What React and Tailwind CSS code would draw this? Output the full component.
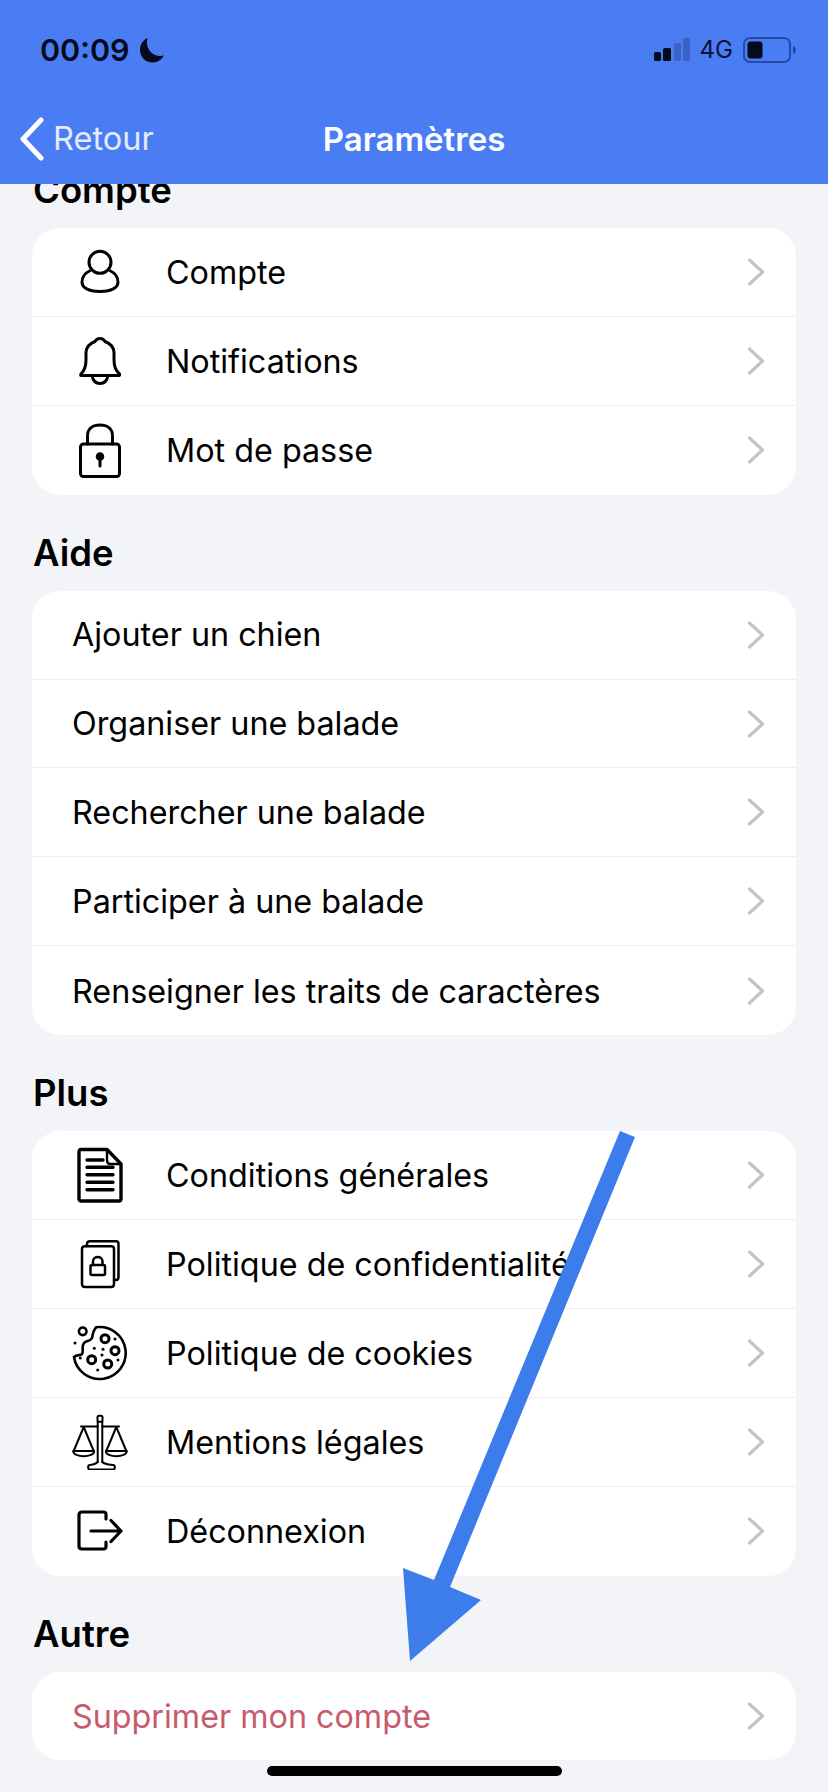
const font = { fontFamily: 'Inter, "Noto Sans", sans-serif' }

function Icon({ children, sw = 2.800 }) {
  return (
    <svg viewBox="-4 -4 56 56" fill="none" stroke="black" strokeWidth={sw} strokeLinecap="round" strokeLinejoin="round" className="w-14 h-14">
      {children}
    </svg>
  )
}

const UserIcon = () => (
  <Icon sw={3}>
    <circle cx="24" cy="14.300" r="11" />
    <path d="M13.500 23C9 25 6 29.500 6 34C6 41 15 43.500 24 43.500C33 43.500 42 41 42 34C42 29.500 39 25 34.500 23" />
  </Icon>
)

const BellIcon = () => (
  <Icon sw={3}>
    <path d="M5 37C8 34 10 29 10 23V16C10 9 15 6 19 4.500C21 .5 27 .5 29 4.500C33 6 38 9 38 16V23C38 29 40 34 43.500 37C44 38 43.500 38.500 43 38.500H5C4.500 38.500 4.500 37.500 5 37Z" />
    <path d="M16 38.500C17 44 20 46.500 24 46.500C28 46.500 31 44 32 38.500" />
  </Icon>
)

const LockIcon = () => (
  <Icon sw={3}>
    <rect x="4.500" y="18" width="39" height="32.500" rx="3" />
    <path d="M11.500 18V10C11.500 2.500 17 -1 24 -1C31 -1 36.500 2.500 36.500 10V18" />
    <circle cx="24" cy="30.500" r="2.800" fill="black" />
    <path d="M24 31V40" />
  </Icon>
)

const DocIcon = () => (
  <Icon sw={3.400}>
    <path d="M5 -1.500H31L45 13V47.500C45 49 44 50 43 50H5C3.500 50 3 49 3 47.500V1C3 -.5 3.500 -1.500 5 -1.500Z" />
    <path d="M31 -1.500V9C31 11.500 32 13 34 13H45" strokeWidth="2.400" />
    <path d="M11 9H27M11 16.300H37M11 23.700H37M11 31.300H37M11 38.700H37" />
  </Icon>
)

const DocLockIcon = () => (
  <Icon sw={2.500}>
    <path d="M11 6V4C11 2 12 1.300 14 1.300H40C42 1.300 42.500 2 42.500 4V37C42.500 39 42 40 40 40H38" />
    <path d="M9 6.300H35C37 6.300 38 7 38 9V44C38 46 37 47 35 47H9C7 47 6 46 6 44V9C6 7 7 6.300 9 6.300Z" />
    <rect x="14.500" y="25" width="14.500" height="10" rx="1.500" />
    <path d="M17 25V21.500C17 15.500 26.500 15.500 26.500 21.500V25" />
  </Icon>
)

const CookieIcon = () => (
  <Icon sw={2.600}>
    <path d="M20 -1.700A26 26 0 1 1 -2 28C1 25 4 27 6 25C8 22 5 18 8 14C10 11 14 13 16 9C17 6 16 3 20 -1.700Z" />
    <circle cx="6.700" cy="2.300" r="3.800" />
    <circle cx="29" cy="9.700" r="4" strokeWidth="3" />
    <circle cx="39" cy="21.700" r="4" strokeWidth="3" />
    <circle cx="15.700" cy="30.700" r="4" strokeWidth="3" />
    <circle cx="31.700" cy="35" r="4" strokeWidth="3" />
    <g fill="black" stroke="none">
      <circle cx="18.300" cy="19.300" r="1.500" />
      <circle cx="26" cy="26" r="1.500" />
      <circle cx="27" cy="20.300" r="1.500" />
      <circle cx="39" cy="10" r="1.500" />
      <circle cx="42" cy="31" r="1.500" />
      <circle cx="21.700" cy="41" r="1.500" />
      <circle cx="4.300" cy="29" r="1.500" />
      <circle cx="-1" cy="14" r="1.500" />
    </g>
  </Icon>
)

const ScalesIcon = () => (
  <Icon sw={2}>
    <rect x="21.500" y="-2.300" width="5" height="6" rx="1.500" />
    <path d="M21.700 3.700V44M26.300 3.700V44" />
    <path d="M5 8.500H21.700M26.300 8.500H43" />
    <path d="M7.700 9L-2.300 33M7.700 9L17.700 33M40.300 9L30.300 33M40.300 9L50.300 33" />
    <path d="M-2.800 33H18.200C18.200 40 -2.800 40 -2.800 33ZM29.800 33H50.800C50.800 40 29.800 40 29.800 33Z" />
    <path d="M21.700 44C20 46 15 47 14 47C11.500 47 11.500 51.500 14 51.500H37C39.500 51.500 39.500 47 37 47C35 47 28 46 26.300 44" />
  </Icon>
)

const ExitIcon = () => (
  <Icon sw={3.200}>
    <path d="M30 12V7.500C30 6 29 5 27.500 5H6C4 5 3 6 3 8V39C3 41 4 42 6 42H27.500C29 42 30 41 30 39.500V35" />
    <path d="M15 24H45M35 13.500L45 24L35 34.500" />
  </Icon>
)

const Chevron = () => (
  <svg viewBox="0 0 18 28" fill="none" stroke="#c4c4c7" strokeWidth="3.200" strokeLinecap="round" strokeLinejoin="round" className="w-[18px] h-[28px]">
    <path d="M2.500 2L15.500 14L2.500 26" />
  </svg>
)

function Row({ icon, label, danger }) {
  return (
    <div className="flex items-center h-[88.900px] border-b border-[#eeeef1] last:border-b-0">
      {icon ? (
        <div className="flex justify-center w-[134px] shrink-0 pl-[1px]">{icon}</div>
      ) : (
        <div className="w-[40px] shrink-0" />
      )}
      <span className={`flex-1 pt-[2px] text-[32.300px] leading-none whitespace-nowrap ${danger ? 'text-[#c75b6b]' : 'text-black'}`}>
        {label}
      </span>
      <div className="pr-[31px]">
        <Chevron />
      </div>
    </div>
  )
}

function Section({ title, rows, first }) {
  return (
    <section className={first ? '-mt-[14px]' : 'mt-[38px]'}>
      <h2 className="h-10 mb-[18px] pl-[1px] text-[36.500px] leading-10 font-semibold text-black">{title}</h2>
      <div className="bg-white rounded-[28px] overflow-hidden">
        {rows.map((r) => (
          <Row key={r.label} {...r} />
        ))}
      </div>
    </section>
  )
}

const sections = [
  {
    title: 'Compte',
    rows: [
      { label: 'Compte', icon: <UserIcon /> },
      { label: 'Notifications', icon: <BellIcon /> },
      { label: 'Mot de passe', icon: <LockIcon /> },
    ],
  },
  {
    title: 'Aide',
    rows: [
      { label: 'Ajouter un chien' },
      { label: 'Organiser une balade' },
      { label: 'Rechercher une balade' },
      { label: 'Participer à une balade' },
      { label: 'Renseigner les traits de caractères' },
    ],
  },
  {
    title: 'Plus',
    rows: [
      { label: 'Conditions générales', icon: <DocIcon /> },
      { label: 'Politique de confidentialité', icon: <DocLockIcon /> },
      { label: 'Politique de cookies', icon: <CookieIcon /> },
      { label: 'Mentions légales', icon: <ScalesIcon /> },
      { label: 'Déconnexion', icon: <ExitIcon /> },
    ],
  },
  {
    title: 'Autre',
    rows: [{ label: 'Supprimer mon compte', danger: true }],
  },
]

function StatusBar() {
  return (
    <div className="flex items-center justify-between h-[50px] mt-[25px] pl-[40px] pr-[31px]">
      <div className="flex items-center gap-[9px]">
        <span className="text-[30.500px] leading-none font-semibold text-[#050a1c]">00:09</span>
        <svg viewBox="0 0 26 26" className="w-[26px] h-[26px]" fill="#050a1c">
          <path d="M8.500 1C4 3 1 7.500 1 13C1 20 6.500 25.500 13.500 25.500C18.500 25.500 22.700 22.700 25 18.500C24 18.800 22.500 19 21 19C14 19 8 13 8 6C8 4.300 8.200 2.500 8.500 1Z" />
        </svg>
      </div>
      <div className="flex items-center">
        <svg viewBox="0 0 37 24" className="w-[37px] h-6">
          <rect x="0" y="14" width="7" height="9" rx="1.500" fill="#050a1c" />
          <rect x="9" y="10" width="8" height="13" rx="1.500" fill="#050a1c" />
          <rect x="20" y="5" width="7" height="18" rx="1.500" fill="#3a62c4" />
          <rect x="29" y="0" width="7" height="23" rx="1.500" fill="#3a62c4" />
        </svg>
        <span className="ml-[9px] text-[24px] leading-none text-[#0a1434]">4G</span>
        <svg viewBox="0 0 54 26" className="ml-[10px] w-[54px] h-[26px]">
          <rect x="1" y="1" width="46" height="24" rx="6" fill="none" stroke="#2849a3" strokeWidth="2" />
          <rect x="4.500" y="4.500" width="15" height="17" rx="3" fill="#050a1c" />
          <path d="M50 9C52 10 53 11.500 53 13C53 14.500 52 16 50 17Z" fill="#2849a3" />
        </svg>
      </div>
    </div>
  )
}

function NavBar() {
  return (
    <div className="grid grid-cols-3 items-center h-[44px] mt-[42px] pl-[20px]">
      <div className="flex items-center text-white/85">
        <svg viewBox="0 0 24 44" fill="none" stroke="white" strokeWidth="5" strokeLinecap="round" strokeLinejoin="round" className="w-6 h-11">
          <path d="M21 3L3 22L21 41" />
        </svg>
        <span className="ml-[9px] text-[32.500px] leading-none">Retour</span>
      </div>
      <h1 className="-ml-[20px] text-center text-[33px] leading-none font-semibold text-white whitespace-nowrap">Paramètres</h1>
    </div>
  )
}

export default function App() {
  return (
    <div style={font} className="relative flex flex-col w-[828px] h-[1792px] overflow-hidden bg-[#f3f4f8]">
      <header className="relative z-10 h-[184px] shrink-0 bg-[#4a7cf4]">
        <StatusBar />
        <NavBar />
      </header>
      <main className="flex-1 overflow-hidden px-[32px]">
        {sections.map((s, i) => (
          <Section key={s.title} {...s} first={i === 0} />
        ))}
      </main>

      {/* annotation arrow drawn over the screenshot */}
      <svg viewBox="0 0 828 1792" className="absolute inset-0 w-[828px] h-[1792px] pointer-events-none">
        <path
          d="M620 1131L635 1137L450 1587L481 1600L410 1661L403 1568L434 1580Z"
          fill="#3c7ceb"
        />
      </svg>

      <div className="absolute left-[267px] top-[1766px] w-[295px] h-[10px] rounded-full bg-black" />
    </div>
  )
}
